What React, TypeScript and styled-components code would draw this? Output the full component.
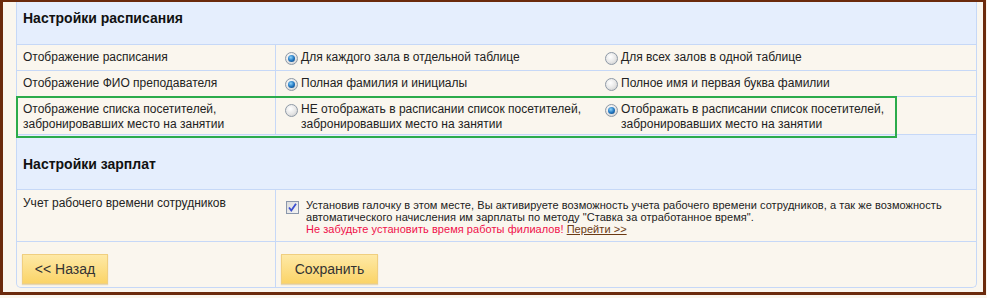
import React from 'react'
import styled, { createGlobalStyle, css } from 'styled-components'

const GlobalStyle = createGlobalStyle`
  body {
    margin: 0;
    background: #faf6ee;
    font-family: "Liberation Sans", Arial, sans-serif;
  }
`

const Frame = styled.div`
  width: 986px;
  height: 295px;
  box-sizing: border-box;
  border: 3px solid #6b2a0c;
  border-top-width: 2px;
  padding: 0 6px 0 13px;
  background: #faf6ee;
`

const Panel = styled.div`
  border: 1px solid #c6d8f7;
  border-top: 0;
  border-radius: 0 0 5px 5px;
  background: #faf6ee;
`

const Header = styled.div<{ $first?: boolean }>`
  background: #e5eefd;
  border-bottom: 1px solid #c6d8f7;
  padding: ${(p) => (p.$first ? '8px 6px 17px' : '21px 6px 16px')};
  font-size: 14px;
  line-height: 17px;
  font-weight: bold;
  color: #111;
`

const Row = styled.div<{ $last?: boolean }>`
  position: relative;
  display: grid;
  grid-template-columns: 259px 1fr;
  border-bottom: ${(p) => (p.$last ? '0' : '1px solid #c6d8f7')};
  font-size: 12px;
  line-height: 15px;
  color: #222;
`

const Label = styled.div<{ $pad?: string }>`
  padding: ${(p) => p.$pad || '5px 6px'};
  border-right: 1px solid #c6d8f7;
`

const Options = styled.div<{ $pad?: string }>`
  display: flex;
  padding: ${(p) => p.$pad || '5px 0 5px 9px'};
`

const Option = styled.label`
  display: flex;
  align-items: flex-start;
  gap: 3px;
  width: 320px;
`

const Radio = styled.span<{ $checked?: boolean }>`
  position: relative;
  flex: none;
  width: 13px;
  height: 13px;
  margin-top: 2px;
  box-sizing: border-box;
  border-radius: 50%;
  border: 1px solid #8e99a6;
  background: radial-gradient(circle at 40% 35%, #ffffff 0%, #e6e6e6 55%, #c4c4c4 100%);
  ${(p) =>
    p.$checked &&
    css`
      &::after {
        content: '';
        position: absolute;
        left: 2px;
        top: 2px;
        width: 7px;
        height: 7px;
        border-radius: 50%;
        background: radial-gradient(circle at 40% 35%, #8fd4fa 0%, #2479c2 50%, #0b3a70 100%);
      }
    `}
`

const Highlight = styled.span`
  position: absolute;
  left: -1px;
  top: -1px;
  width: 881px;
  height: 42px;
  box-sizing: border-box;
  border: 2px solid #2bab4b;
  pointer-events: none;
`

const CheckCell = styled.div`
  display: flex;
  align-items: flex-start;
  gap: 7px;
  padding: 9px 6px 6px 10px;
`

const CheckBox = styled.span`
  flex: none;
  width: 13px;
  height: 13px;
  margin-top: 2px;
  box-sizing: border-box;
  border: 1px solid #8a97ab;
  background: linear-gradient(135deg, #dcdcdc 0%, #f4f4f4 100%);
  display: flex;
  align-items: center;
  justify-content: center;
`

const Note = styled.div`
  font-size: 11px;
  line-height: 12px;
  letter-spacing: 0.05px;
  color: #222;
  white-space: nowrap;
`

const Warning = styled.span`
  color: #f0104a;
`

const GoLink = styled.a`
  color: #6b3a14;
  text-decoration: underline;
`

const ButtonCell = styled.div<{ $divider?: boolean }>`
  padding: 12px 0 3px 5px;
  ${(p) => p.$divider && 'border-right: 1px solid #c6d8f7;'}
`

const Button = styled.button<{ $w: number }>`
  width: ${(p) => p.$w}px;
  height: 30px;
  border: 1px solid #f0cf80;
  background: linear-gradient(#fee9a6, #fbd468);
  box-shadow: 0 1px 1px rgba(190, 160, 80, 0.35);
  font-family: "Liberation Sans", Arial, sans-serif;
  font-size: 14px;
  color: #333;
  padding: 0;
`

export default function App() {
  return (
    <>
      <GlobalStyle />
      <Frame>
        <Panel>
          <Header $first>Настройки расписания</Header>
          <Row>
            <Label>Отображение расписания</Label>
            <Options>
              <Option>
                <Radio $checked />
                Для каждого зала в отдельной таблице
              </Option>
              <Option>
                <Radio />
                Для всех залов в одной таблице
              </Option>
            </Options>
          </Row>
          <Row>
            <Label>Отображение ФИО преподавателя</Label>
            <Options>
              <Option>
                <Radio $checked />
                Полная фамилия и инициалы
              </Option>
              <Option>
                <Radio />
                Полное имя и первая буква фамилии
              </Option>
            </Options>
          </Row>
          <Row>
            <Label $pad="5px 6px 2px">
              Отображение списка посетителей,
              <br />
              забронировавших место на занятии
            </Label>
            <Options $pad="5px 0 2px 9px">
              <Option>
                <Radio />
                <span>
                  НЕ отображать в расписании список посетителей,
                  <br />
                  забронировавших место на занятии
                </span>
              </Option>
              <Option>
                <Radio $checked />
                <span>
                  Отображать в расписании список посетителей,
                  <br />
                  забронировавших место на занятии
                </span>
              </Option>
            </Options>
            <Highlight />
          </Row>
          <Header>Настройки зарплат</Header>
          <Row>
            <Label $pad="6px 6px">Учет рабочего времени сотрудников</Label>
            <CheckCell>
              <CheckBox>
                <svg width="11" height="11" viewBox="0 0 11 11">
                  <path d="M2 5.5 L4.3 8.5 L9 1.8" fill="none" stroke="#3b4fcf" strokeWidth="1.8" />
                </svg>
              </CheckBox>
              <Note>
                Установив галочку в этом месте, Вы активируете возможность учета рабочего времени сотрудников, а так же возможность
                <br />
                автоматического начисления им зарплаты по методу "Ставка за отработанное время".
                <br />
                <Warning>Не забудьте установить время работы филиалов!</Warning> <GoLink>Перейти &gt;&gt;</GoLink>
              </Note>
            </CheckCell>
          </Row>
          <Row $last>
            <ButtonCell $divider>
              <Button $w={86}>&lt;&lt; Назад</Button>
            </ButtonCell>
            <ButtonCell>
              <Button $w={97}>Сохранить</Button>
            </ButtonCell>
          </Row>
        </Panel>
      </Frame>
    </>
  )
}
